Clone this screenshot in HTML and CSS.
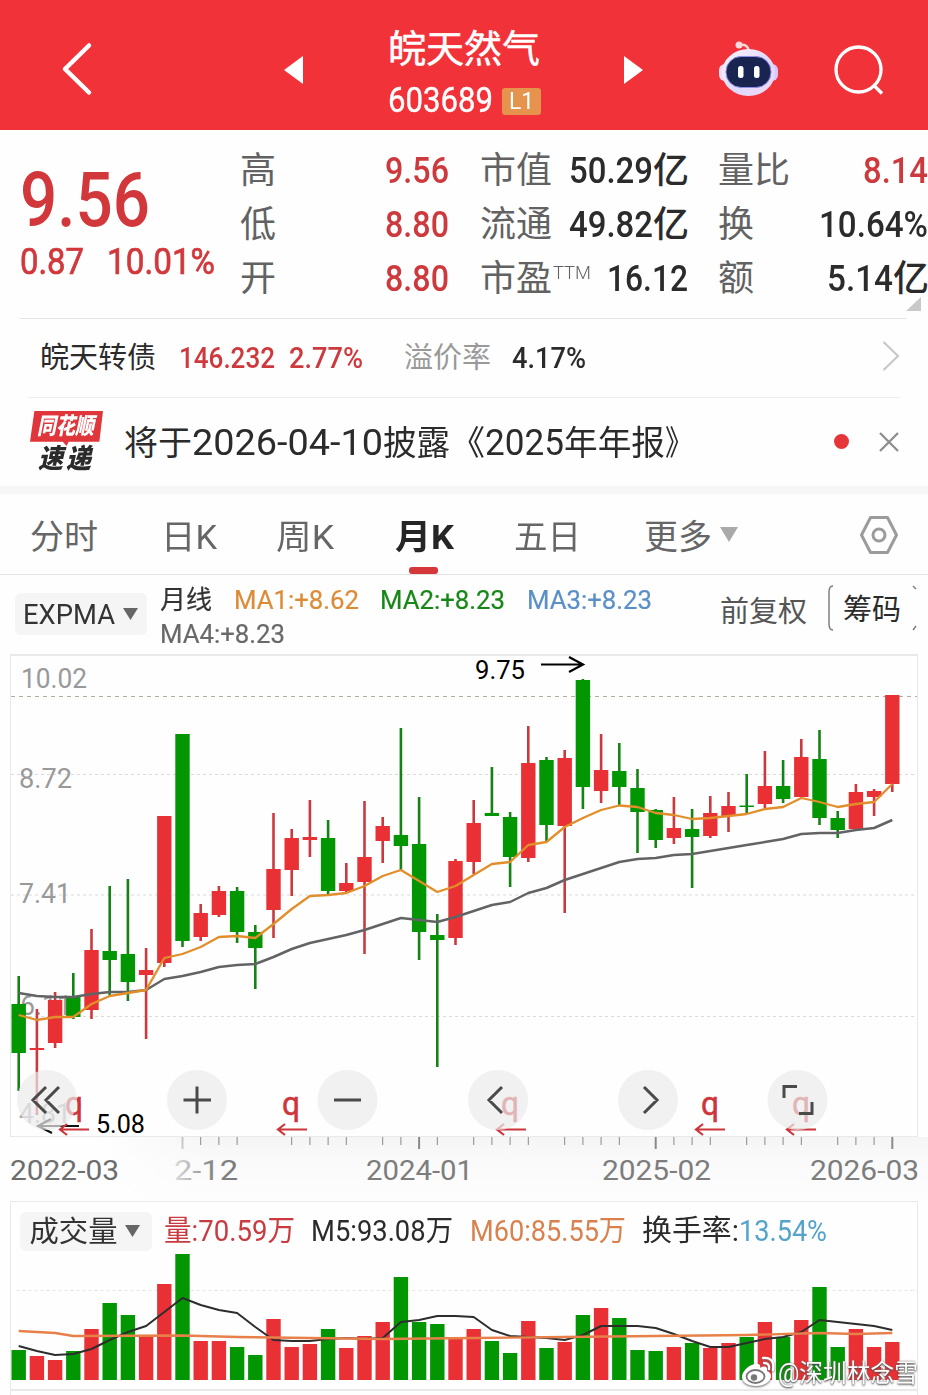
FILE: index.html
```html
<!DOCTYPE html>
<html lang="zh-CN">
<head>
<meta charset="utf-8">
<title>皖天然气 603689</title>
<link rel="stylesheet" href="styles.css">
</head>
<body>
<header class="topbar">
  <svg class="back" width="34" height="56" viewBox="0 0 34 56"><path d="M30 4.500L6 28L30 51.500" fill="none" stroke="#fff" stroke-width="4.500" stroke-linecap="round" stroke-linejoin="round"/></svg>
  <svg class="prev" width="20" height="30" viewBox="0 0 20 30"><path d="M19 1V29L0 15Z" fill="#fff"/></svg>
  <div class="title">
    <div class="name">皖天然气</div>
    <div class="code"><span data-w="105">603689</span><span class="level"><span data-w="25">L1</span></span></div>
  </div>
  <svg class="next" width="20" height="30" viewBox="0 0 20 30"><path d="M1 1V29L20 15Z" fill="#fff"/></svg>
  <svg class="robot" width="60" height="58" viewBox="0 0 60 58">
    <defs><linearGradient id="shell" x1="0" y1="0" x2="1" y2="1"><stop offset="0" stop-color="#fff4fa"/><stop offset=".55" stop-color="#dfd9fb"/><stop offset="1" stop-color="#f3d8f4"/></linearGradient></defs>
    <path d="M21 5Q30 3 31 12" fill="none" stroke="#ffd3d8" stroke-width="2.500"/><circle cx="21" cy="5" r="3.500" fill="#ffd9dc"/>
    <rect x="1" y="24" width="12" height="17" rx="6" fill="#ecdcf5"/><rect x="48" y="24" width="12" height="17" rx="6" fill="#d8c8ff"/>
    <ellipse cx="30.500" cy="32.500" rx="26.500" ry="23.500" fill="url(#shell)"/>
    <rect x="8" y="16.500" width="45" height="31" rx="15" fill="#1a2450" stroke="#8d8fe8" stroke-width="1"/>
    <rect x="20" y="26" width="5.500" height="12" rx="2.500" fill="#fff"/><rect x="36" y="26" width="5.500" height="12" rx="2.500" fill="#fff"/>
  </svg>
  <svg class="search" width="52" height="52" viewBox="0 0 52 52" fill="none" stroke="#fff" stroke-width="3.300"><circle cx="25.500" cy="25.500" r="22.500"/><path d="M40 40.500L49 49.500"/></svg>
</header>

<section class="quote">
  <div class="price">
    <div class="last"><span data-w="130">9.56</span></div>
    <div class="change"><span data-w="64">0.87</span><span data-w="108">10.01%</span></div>
  </div>
  <dl class="stats">
    <div><dt>高</dt><dd class="up"><span data-w="64">9.56</span></dd></div>
    <div><dt>低</dt><dd class="up"><span data-w="64">8.80</span></dd></div>
    <div><dt>开</dt><dd class="up"><span data-w="64">8.80</span></dd></div>
  </dl>
  <dl class="stats">
    <div><dt>市值</dt><dd><span data-w="84">50.29</span><span>亿</span></dd></div>
    <div><dt>流通</dt><dd><span data-w="84">49.82</span><span>亿</span></dd></div>
    <div><dt>市盈<small data-w="38">TTM</small></dt><dd><span data-w="81">16.12</span></dd></div>
  </dl>
  <dl class="stats">
    <div><dt>量比</dt><dd class="up"><span data-w="65">8.14</span></dd></div>
    <div><dt>换</dt><dd><span data-w="109">10.64%</span></dd></div>
    <div><dt>额</dt><dd><span data-w="66">5.14</span><span>亿</span></dd></div>
  </dl>
  <i class="corner"></i>
</section>

<section class="bond">
  <span>皖天转债</span><span class="up num" data-w="96">146.232</span><span class="up num" data-w="74">2.77%</span>
  <span class="muted">溢价率</span><span class="num" data-w="74">4.17%</span>
  <svg class="more" width="18" height="32" viewBox="0 0 18 32"><path d="M1.500 2L16 16L1.500 30" fill="none" stroke="#c8c8c8" stroke-width="2.200"/></svg>
</section>

<section class="notice">
  <div class="brand"><div class="brand-top"><span data-w="57">同花顺</span></div><div class="brand-bottom"><span data-w="25">速</span><span data-w="25">递</span></div></div>
  <div class="message"><span data-w="68">将于</span><span class="n" data-w="191">2026-04-10</span><span data-w="67">披露</span><span data-w="35">《</span><span class="n" data-w="79">2025</span><span data-w="101">年年报</span><span data-w="28">》</span></div>
  <i class="dot"></i>
  <svg class="close" width="20" height="20" viewBox="0 0 20 20"><path d="M1 1L19 19M19 1L1 19" stroke="#8e8e8e" stroke-width="2.300"/></svg>
</section>

<nav class="tabs">
  <span data-w="68">分时</span><span data-w="56">日K</span><span data-w="58">周K</span><span class="active"><span data-w="59">月K</span></span><span data-w="67">五日</span><span data-w="68">更多</span>
  <svg class="tab-arrow" width="20" height="16" viewBox="0 0 20 16"><path d="M1 0H19L10 15Z" fill="#aaa"/></svg>
  <svg class="settings" width="40" height="40" viewBox="0 0 40 40" fill="none" stroke="#9b9b9b"><path d="M11.500 2.500H28.500L37.500 20L28.500 37.500H11.500L2.500 20Z" stroke-width="3" stroke-linejoin="round"/><circle cx="20" cy="20" r="6" stroke-width="3"/></svg>
</nav>

<section class="indicator">
  <button class="picker"><span data-w="92">EXPMA</span><svg width="15" height="12" viewBox="0 0 15 12"><path d="M0 0H15L7.500 12Z" fill="#666"/></svg></button>
  <div class="averages">
    <div><span class="period" data-w="52">月线</span><span class="ma1" data-w="125">MA1:+8.62</span><span class="ma2" data-w="125">MA2:+8.23</span><span class="ma3" data-w="125">MA3:+8.23</span></div>
    <div><span class="ma4" data-w="125">MA4:+8.23</span></div>
  </div>
  <span class="adjust">前复权</span>
  <span class="chips"><svg width="90" height="46" viewBox="0 0 90 46" fill="none" stroke="#777" stroke-width="1.400"><path d="M5 1Q1 1 1 7V39Q1 45 5 45M85 1L88 4M85 45L88 41"/></svg><b>筹码</b></span>
</section>

<svg id="candles" class="candles" width="928" height="551" viewBox="0 650 928 551"></svg>

<section class="volume">
  <div class="legend">
    <button class="picker"><span data-w="88">成交量</span><svg width="15" height="12" viewBox="0 0 15 12"><path d="M0 0H15L7.500 12Z" fill="#666"/></svg></button>
    <span class="v1" data-w="131">量:70.59万</span><span class="v2" data-w="142">M5:93.08万</span><span class="v3" data-w="156">M60:85.55万</span><span class="v4" data-w="97">换手率:</span><span class="v5" data-w="88">13.54%</span>
  </div>
  <svg id="bars" class="bars" width="928" height="143" viewBox="0 1252 928 143"></svg>
</section>

<div class="watermark">
  <svg width="36" height="32" viewBox="0 0 36 32">
    <path d="M13 8C6 9 0 16 0 21C0 27 7 30 14 30C23 30 29 25 29 20C29 17 27 16 25 15C26 11 23 9 18 12C19 9 17 7 13 8Z" fill="#fff"/>
    <ellipse cx="13.500" cy="20.500" rx="9" ry="6.500" fill="none" stroke="#777" stroke-width="1.800"/><circle cx="12" cy="21.500" r="3.200" fill="#777"/>
    <path d="M22 7Q28 7 27 13M21 2Q33 1 31 14" fill="none" stroke="#fff" stroke-width="2.300" stroke-linecap="round"/>
  </svg>
  <span data-w="140">@深圳林念雪</span>
</div>
<script src="chart.js"></script>
</body>
</html>
```

FILE: styles.css
```css
* { box-sizing: border-box; }
body {
  position: relative;
  width: 928px;
  height: 1395px;
  margin: 0;
  overflow: hidden;
  background: #fefefe;
  color: #2b2b2b;
  font-family: Roboto, "Noto Sans CJK SC", sans-serif;
}
svg { display: block; flex: none; }
[data-w] { display: inline-block; white-space: nowrap; transform-origin: 0 50%; flex: none; }
.up { color: #ce393d; }

.topbar { display: flex; height: 130px; background: #f23239; color: #fff; }
.back { margin: 41px 0 0 59px; }
.prev { margin: 55px 0 0 191px; }
.title { width: 156px; margin-left: 84px; }
.name { height: 49px; margin-top: 25px; line-height: 49px; font-size: 38px; white-space: nowrap; -webkit-text-stroke: .5px; }
.code { display: flex; align-items: center; height: 54px; line-height: 54px; font-size: 35px; -webkit-text-stroke: .4px; }
.level { width: 39px; height: 27px; margin-left: 9px; padding-left: 7px; border-radius: 3px; background: #e6934d; font-size: 24px; line-height: 27px; -webkit-text-stroke: 0; }
.next { margin: 55px 0 0 79px; }
.robot { margin: 40px 0 0 75px; }
.search { margin: 44px 0 0 55px; }

.quote { position: relative; display: flex; height: 188px; }
.price { width: 220px; padding: 32px 0 0 20px; color: #d2373b; }
.last { height: 76px; line-height: 76px; font-size: 76px; font-weight: 500; }
.change { display: flex; gap: 23px; height: 47px; line-height: 47px; font-size: 37px; -webkit-text-stroke: .7px; }
.stats { width: 209px; margin: 14px 0 0 20px; }
.stats + .stats { width: 208px; margin-left: 31px; }
.stats + .stats + .stats { width: 210px; margin-left: 30px; }
.stats > div { display: flex; justify-content: space-between; height: 54px; line-height: 54px; font-size: 36px; }
.stats dt { display: flex; color: #626262; }
.stats dd { display: flex; margin: 0; font-size: 37px; font-weight: 500; }
.stats dd span:nth-child(2) { width: 35px; font-size: 36px; font-weight: 500; }
.stats small { margin-left: 1px; font-size: 19px; line-height: 42px; font-weight: 300; }
.corner { position: absolute; right: 7px; bottom: 7px; width: 15px; height: 14px; background: #c9c9c9; clip-path: polygon(100% 0, 100% 100%, 0 100%); }

.bond { display: flex; align-items: center; height: 79px; padding: 0 28px 0 40px; font-size: 29px; line-height: 40px; background: linear-gradient(#e4e4e4, #e4e4e4) 20px 0 / 886px 1px no-repeat; }
.bond .num { margin-left: 23px; font-weight: 500; }
.bond .num + .num { margin-left: 14px; }
.bond .muted { margin-left: 41px; color: #999; }
.bond .muted + .num { margin-left: 21px; }
.more { margin-left: auto; margin-top: -3px; }

.notice { display: flex; align-items: center; height: 89px; padding: 0 29px 0 30px; font-size: 34px; background: linear-gradient(#eee, #eee) 28px 0 / 872px 1px no-repeat; }
.brand { width: 73px; margin-right: 21px; font-weight: 900; font-style: italic; }
.brand-top { height: 35px; padding-left: 7px; color: #fff; background: #e0353a; font-size: 23px; line-height: 32px; clip-path: polygon(6% 0, 100% 0, 95% 88%, 53% 88%, 50% 100%, 45% 88%, 0 88%); }
.brand-bottom { display: flex; gap: 3px; height: 26px; padding-left: 8px; font-size: 27px; line-height: 26px; }
.message { display: flex; align-items: baseline; margin-top: -2px; }
.message .n { font-size: 36px; }
.dot { width: 15px; height: 15px; margin-left: auto; margin-top: -1px; border-radius: 50%; background: #e53539; }
.close { margin-left: 30px; }

.tabs { display: flex; align-items: center; height: 89px; padding: 1px 29px 0 30px; border-top: 8px solid #f6f6f6; border-bottom: 1px solid #e2e2e2; color: #666; font-size: 34px; line-height: 50px; }
.tabs > span { margin-top: 4px; margin-right: 63px; }
.tabs > span:nth-child(2) { margin-right: 59px; }
.tabs > span:nth-child(3) { margin-right: 61px; }
.tabs > span:nth-child(4) { margin-right: 60px; }
.tabs > span:nth-child(6) { margin-right: 7px; }
.active { position: relative; color: #262626; font-weight: 700; }
.active::after { content: ""; position: absolute; left: 14px; bottom: -12px; width: 29px; height: 7px; border-radius: 3px; background: #d5373b; }
.settings { margin-left: auto; }

.indicator { display: flex; height: 75px; padding-left: 15px; font-size: 26px; }
.picker { display: flex; flex: none; align-items: center; justify-content: flex-start; width: 132px; height: 42px; padding: 2px 0 0 8px; border: 0; border-radius: 6px; background: #f5f5f5; color: #333; font: 28px/40px Roboto, "Noto Sans CJK SC", sans-serif; }
.picker svg { margin-left: 8px; margin-top: -2px; }
.indicator .picker { margin-top: 18px; }
.averages { flex: none; width: 573px; padding: 8px 0 0 13px; }
.averages div { display: flex; gap: 21.500px; height: 34px; line-height: 34px; -webkit-text-stroke: .2px; }
.period { color: #333; }
.ma1 { color: #dc8b36; }
.ma2 { color: #178717; }
.ma3 { color: #5a8fc8; }
.ma4 { color: #696969; }
.adjust { flex: none; width: 87px; color: #555; font-size: 29px; line-height: 75px; white-space: nowrap; }
.chips { position: relative; flex: none; width: 90px; height: 46px; margin: 10px 0 0 21px; }
.chips b { position: absolute; inset: 0 0 0 15px; font-size: 29px; font-weight: 400; line-height: 51px; white-space: nowrap; }

.candles text, .bars text { font-family: Roboto, sans-serif; }
.volume { height: 194px; }
.legend { display: flex; align-items: center; height: 51px; margin: 0 10px; padding: 8px 0 0 9px; border: 1px solid #e9e9e9; border-bottom: 0; font-size: 29px; line-height: 39px; }
.legend > span { height: 39px; }
.legend .picker { height: 39px; padding-left: 9px; font-size: 29px; line-height: 37px; }
.legend .picker svg { margin-left: 8px; }
.v1 { margin-left: 12px; color: #c93b40; }
.v2 { margin-left: 16px; }
.v3 { margin-left: 17px; color: #d8814f; }
.v4 { margin-left: 16px; }
.v5 { color: #54a3ca; }

.watermark { position: absolute; left: 742px; top: 1356px; display: flex; align-items: center; height: 34px; color: #fff; font-size: 25px; line-height: 37px; text-shadow: 0 1px 2px #444, 0 0 2px #777; }
.watermark svg { margin-top: -3px; filter: drop-shadow(0 1px 1px #666); }
```

FILE: chart.js
```js
// Condense text runs to their column width.
for (const el of document.querySelectorAll('[data-w]')) {
  const target = Number(el.dataset.w);
  const natural = el.getBoundingClientRect().width;
  el.style.width = target + 'px';
  el.style.transform = 'scaleX(' + target / natural + ')';
}

const RED = '#e93135', GREEN = '#039603';
const x = i => 18.7 + 18.2 * i;
const line = (x1, y1, x2, y2, color, width = 1, extra = '') =>
  `<line x1="${x1}" y1="${y1}" x2="${x2}" y2="${y2}" stroke="${color}" stroke-width="${width}" ${extra}/>`;
const text = (s, tx, y, w, size, color, extra = '') =>
  `<text x="${tx}" y="${y}" textLength="${w}" lengthAdjust="spacingAndGlyphs" font-size="${size}" fill="${color}" ${extra}>${s}</text>`;
const path = (d, color, width = 3, extra = '') =>
  `<path d="${d}" fill="none" stroke="${color}" stroke-width="${width}" ${extra}/>`;
const curve = (points, color, width) =>
  `<polyline points="${points.map((p, i) => Array.isArray(p) ? x(p[0]) + ',' + p[1] : x(i) + ',' + p).join(' ')}" fill="none" stroke="${color}" stroke-width="${width}" stroke-linejoin="round"/>`;

// direction, wick top, wick bottom, body top, body bottom, volume top
const months = `G 976 1091 1004 1053 1350|R 1009 1115 1048 1050 1356|R 992 1048 1000 1043 1360|G 973 1019 996 1017 1351
R 929 1019 950 1010 1329|G 886 997 951 960 1303|G 879 1001 954 982 1315|R 948 1039 970 975 1335|R 816 967 816 963 1284
G 734 947 734 941 1254|R 904 941 913 937 1341|R 886 917 891 915 1341|G 887 943 891 932 1347|G 925 989 932 948 1355
R 813 938 869 910 1319|R 829 896 838 870 1347|R 800 857 837 840 1344|G 820 894 838 891 1329|R 863 893 883 891 1348
R 801 954 857 882 1336|R 817 863 826 841 1322|G 728 870 835 846 1277|G 797 960 844 932 1322|G 914 1067 935 940 1324
R 859 945 861 938 1338|R 800 874 823 862 1329|G 767 816 813 816 1341|G 812 887 817 857 1353|R 726 862 763 858 1321
G 757 841 760 825 1348|R 750 913 758 826 1342|G 679 809 680 787 1315|R 734 803 770 791 1308|G 743 805 771 787 1318
G 769 853 788 812 1350|G 809 848 810 840 1351|R 797 844 828 838 1347|G 809 888 829 837 1343|R 796 838 813 836 1348
R 792 832 806 816 1343|G 774 814 805.5 807 1337|R 751 808 786 804 1322|G 760 803 786 799 1337|R 739 797 757 797 1320
G 730 825 759 818 1287|G 811 838 818 830 1347|R 784 831 792 829 1329|R 789 816 791 797 1347|R 695 792 695 784 1342`
  .split(/[|\n]/).map(r => r.trim().split(' ')).map(r => [r[0] === 'R' ? RED : GREEN, ...r.slice(1).map(Number)]);

const fast = [1015,1020,1017,1017,1004,996,993,990,958,954,947,937,936,938,924,909,896,895,893,886,876,870,881,892,886,875,864,862,845,842,827,818,810,805.5,807,813,815,819,818,816,814,809,807,798,802,807,804,802,784];
const slow = [993,996,997,997,994,992,992,990,979,976,972,967,965,964,957,949,943,939,935,930,924,918,920,922,917,911,905,902,893,888,880,874,868,862,859,858,855,854,851,848,845,842,839,834,833,833,830,828,820];

let k = `<defs><linearGradient id="fade"><stop offset="0" stop-color="#ddd"/><stop offset=".6" stop-color="#888"/><stop offset="1" stop-color="#777"/></linearGradient>
<linearGradient id="shade" x2="0" y2="1"><stop offset="0" stop-color="#f5f5f5"/><stop offset=".4" stop-color="#fafafa"/><stop offset="1" stop-color="#fdfdfd"/></linearGradient>
<linearGradient id="reveal"><stop offset="0" stop-color="#fefefe"/><stop offset="1" stop-color="#fefefe" stop-opacity="0"/></linearGradient></defs>`;
k += '<rect x="100" y="1137" width="828" height="62" fill="url(#shade)"/><rect x="99" y="1137" width="110" height="62" fill="url(#reveal)"/>';
k += line(10, 655, 918, 655, '#e9e9e9', 2) + line(10.5, 655, 10.5, 1136, '#e9e9e9') + line(917.5, 655, 917.5, 1136, '#e9e9e9') + line(10, 1136.5, 918, 1136.5, '#e9e9e9');
k += line(11, 696.5, 917, 696.5, '#b5aca0', 1, 'stroke-dasharray="4 4"');
for (const y of [774.5, 895, 1016.5]) k += line(11, y, 917, y, '#dadada', 1, 'stroke-dasharray="3 3"');
k += text('10.02', 21, 688, 66, 28, '#999') + text('8.72', 19, 788, 53, 28, '#999') + text('7.41', 19, 902.5, 52, 28, '#999') + text('6.11', 20, 1015, 52, 28, '#999') + text('4.81', 19, 1123, 52, 28, '#aaa');
months.forEach(([c, t, b, o, p], i) => {
  k += line(x(i), t, x(i), b, c === RED ? '#c9393e' : '#168216', 2.6) + `<rect x="${x(i) - 7.2}" y="${o}" width="14.400" height="${p - o}" fill="${c}"/>`;
});
k += curve(slow, '#626365', 2.5) + curve(fast, '#e28e2b', 2.3);
k += text('9.75', 475, 679, 50, 26, '#000') + path('M541 664.500H582M569 657L583 664.500L569 672', '#000', 2.2);
k += text('5.08', 96, 1133, 49, 26, '#000') + path('M79 1126H38M51 1119L38 1126L52 1133', '#111', 2.2);
for (const [qx, ax] of [[65, 60], [282, 278], [501, 497], [701, 696], [792, 787]]) {
  k += text('q', qx, 1115, 18, 33, '#cd353b', 'stroke="#cd353b" stroke-width=".5"') + path(`M${ax + 29} 1129.500H${ax}M${ax + 7} 1124L${ax} 1129.500L${ax + 7} 1135`, '#cd353b', 2.2);
}
for (const cx of [47, 197, 347.5, 498, 648, 797.5]) k += `<circle cx="${cx}" cy="1100" r="30" fill="#ebebeb" opacity=".7"/>`;
k += path('M46 1087L33 1100L46 1113M59 1087L46 1100L59 1113M183.500 1100H211M197 1086.500V1113.500M334 1100H361M502 1087L489 1100L502 1113M644 1087L657 1100L644 1113M784 1098V1086.500H797M799 1113.500H812V1102', '#4a4a4a', 3);
// Ticks run in groups of four; every thirteenth month is a major one.
months.forEach((m, i) => {
  if (i < 9 || i === 13 || (i > 9 && i % 5 === 4)) return;
  const major = i % 13 === 9;
  k += line(x(i), 1137, x(i), major ? 1149 : 1145, i === 9 ? '#c8c8c8' : '#8a8a8a', major ? 2 : 1);
});
k += text('2022-03', 10, 1179.5, 109, 28, '#6d6d6d') + text('2-12', 174, 1179.5, 64, 28, 'url(#fade)') + text('2024-01', 366, 1179.5, 107, 28, '#7d7d7d') + text('2025-02', 602, 1179.5, 109, 28, '#7d7d7d') + text('2026-03', 810, 1179.5, 109, 28, '#7d7d7d');
document.getElementById('candles').innerHTML = k;

let v = line(10.5, 1252, 10.5, 1395, '#e9e9e9') + line(917.5, 1252, 917.5, 1395, '#e9e9e9') + line(10, 1390, 918, 1390, '#e9e9e9', 2) + line(16, 1290.5, 917, 1290.5, '#ebebeb', 1, 'stroke-dasharray="4 2"');
months.forEach((m, i) => { v += `<rect x="${x(i) - 7.2}" y="${m[5]}" width="14.400" height="${1380 - m[5]}" fill="${m[0]}"/>`; });
v += curve([1346,1351,1355,1354,1349,1340,1332,1326,1312,1298,1305,1310,1313,1327,1340,1341,1341,1339,1338,1339,1338,1322,1320,1316,1316,1317,1330,1336,1337,1338,1340,1335,1326,1326,1326,1328,1334,1341,1347,1347,1343,1339,1337,1332,1320,1322,1324,1326,1330], '#2d2d2d', 2);
v += curve([[0,1331],[2,1333],[3,1336],[9,1335.5],[12,1337],[16,1338],[20,1339],[25,1338],[30,1337],[40,1335],[44,1333],[46,1334],[48,1333]], '#e8804a', 2.3);
document.getElementById('bars').innerHTML = v;
```
